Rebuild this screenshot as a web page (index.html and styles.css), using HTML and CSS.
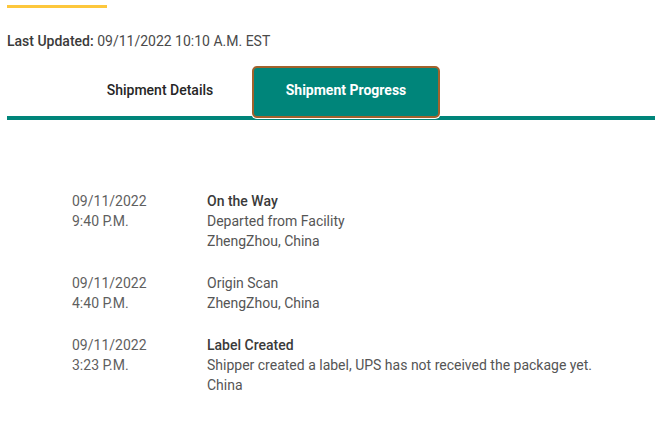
FILE: index.html
```html
<!DOCTYPE html>
<html>
<head>
<meta charset="utf-8">
<link rel="stylesheet" href="styles.css">
</head>
<body>
<div class="page">
  <div class="accent"></div>
  <p class="updated"><span class="label">Last Updated:</span> 09/11/2022 10:10 A.M. EST</p>
  <nav class="tabs">
    <div class="tab">Shipment Details</div>
    <div class="tab active">Shipment Progress</div>
  </nav>
  <div class="events">
    <div class="event">
      <div class="when"><div>09/11/2022</div><div>9:40 P.M.</div></div>
      <div class="what"><div class="title">On the Way</div><div>Departed from Facility</div><div>ZhengZhou, China</div></div>
    </div>
    <div class="event">
      <div class="when"><div>09/11/2022</div><div>4:40 P.M.</div></div>
      <div class="what"><div>Origin Scan</div><div>ZhengZhou, China</div></div>
    </div>
    <div class="event">
      <div class="when"><div>09/11/2022</div><div>3:23 P.M.</div></div>
      <div class="what"><div class="title">Label Created</div><div>Shipper created a label, UPS has not received the package yet.</div><div>China</div></div>
    </div>
  </div>
</div>
</body>
</html>
```
FILE: styles.css
```css
html, body {
  margin: 0;
  padding: 0;
  background: #fff;
}
body {
  font-family: Roboto, "Liberation Sans", Arial, sans-serif;
  font-size: 14px;
  line-height: 20px;
  color: #555;
}
.page {
  padding-left: 7px;
}
.accent {
  width: 100px;
  height: 3px;
  margin-top: 5px;
  background: #fdc73c;
}
.updated {
  margin: 23px 0 0 0;
  color: #4a4a4a;
}
.updated .label {
  color: #3a3a3a;
  font-weight: 500;
}
.tabs {
  display: flex;
  margin-top: 15px;
  padding-left: 57px;
  height: 50px;
  border-bottom: 4px solid #00857a;
}
.tab {
  width: 188px;
  height: 50px;
  display: flex;
  align-items: center;
  justify-content: center;
  font-weight: 500;
  color: #262626;
  box-sizing: border-box;
  padding: 0 0 2px 4px;
}
.tab.active {
  height: 52px;
  margin-bottom: -2px;
  background: #00857a;
  color: #fff;
  border: 2px solid #a2622c;
  border-radius: 5px;
  box-shadow: 0 0 0 1px #fff;
  font-weight: 700;
  padding: 0 0 4px 0;
}
.events {
  padding: 71px 0 0 65px;
  display: flex;
  flex-direction: column;
  gap: 22px;
}
.event {
  display: grid;
  grid-template-columns: 135px 1fr;
}
.when {
  color: #5f5f5f;
}
.what {
  color: #555;
}
.what .title {
  color: #3a3a3a;
  font-weight: 500;
}
```
